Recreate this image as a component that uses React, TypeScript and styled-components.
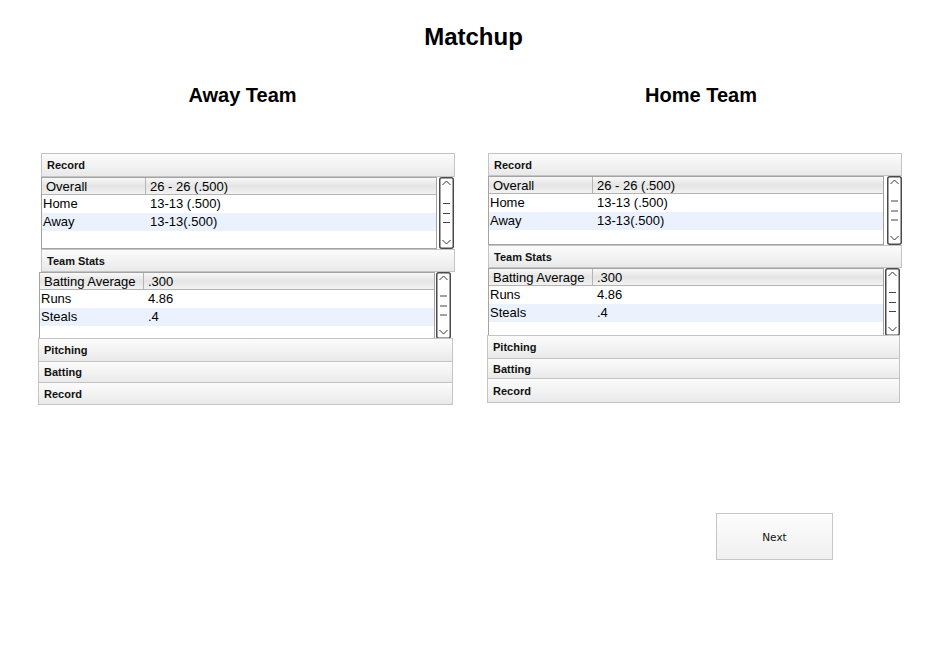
import React from "react";
import styled, { createGlobalStyle } from "styled-components";

const Global = createGlobalStyle`
  html, body { margin: 0; padding: 0; background: #fff; }
  body { font-family: "Liberation Sans", Arial, sans-serif; color: #000; }
`;

const Page = styled.div`
  width: 936px;
  height: 660px;
  padding-top: 23px;
  box-sizing: border-box;
`;

const Title = styled.h1`
  margin: 0;
  padding-left: 11px;
  text-align: center;
  font-size: 24px;
  line-height: 28px;
  font-weight: 700;
`;

const Columns = styled.div`
  display: flex;
  align-items: flex-start;
  gap: 33px;
  padding-left: 38px;
  margin-top: 32px;
`;

const Column = styled.div`
  width: 416px;
  display: flex;
  flex-direction: column;
`;

const TeamTitle = styled.h2<{ $shift: number }>`
  margin: 0 0 46px;
  text-align: center;
  font-size: 20px;
  line-height: 24px;
  font-weight: 700;
  padding-left: ${(p) => (p.$shift > 0 ? p.$shift * 2 : 0)}px;
  padding-right: ${(p) => (p.$shift < 0 ? -p.$shift * 2 : 0)}px;
`;

const Panel = styled.div`
  display: flex;
  flex-direction: column;
  width: 416px;
`;

const SectionHeader = styled.div<{ $offset?: number; $h: number; $w?: number; $overlap?: boolean }>`
  box-sizing: border-box;
  height: ${(p) => p.$h}px;
  width: ${(p) => p.$w ?? 414}px;
  margin-left: ${(p) => p.$offset ?? 0}px;
  margin-top: ${(p) => (p.$overlap ? -1 : 0)}px;
  border: 1px solid #c4c4c4;
  background: linear-gradient(#fbfbfb, #f1f1f1 60%, #e9e9e9);
  display: flex;
  align-items: center;
  padding-left: 5px;
  font-size: 11px;
  font-weight: 700;
  color: #111;
`;

const Content = styled.div<{ $offset: number; $h: number; $gap: number }>`
  display: flex;
  gap: ${(p) => p.$gap}px;
  margin-left: ${(p) => p.$offset}px;
  height: ${(p) => p.$h}px;
`;

const Table = styled.div`
  box-sizing: border-box;
  width: 396px;
  height: 100%;
  border: 1px solid #a3a3a3;
  background: #fff;
  font-size: 13px;
  overflow: hidden;
`;

const HeadRow = styled.div`
  display: flex;
  height: 16px;
  line-height: 18px;
  border-bottom: 1px solid #b4b4b4;
  background: linear-gradient(#f8f8f8, #e4e4e4 50%, #f2f2f2);
  overflow: hidden;
`;

const HeadCell = styled.div<{ $first?: boolean }>`
  box-sizing: border-box;
  width: ${(p) => (p.$first ? "104px" : "auto")};
  flex: ${(p) => (p.$first ? "none" : "1")};
  padding-left: 4px;
  border-right: ${(p) => (p.$first ? "1px solid #b4b4b4" : "none")};
`;

const Row = styled.div<{ $alt: boolean }>`
  display: flex;
  height: 18px;
  line-height: 18px;
  background: ${(p) => (p.$alt ? "#ebf2fd" : "#fff")};
`;

const Cell = styled.div<{ $first?: boolean }>`
  box-sizing: border-box;
  width: ${(p) => (p.$first ? "104px" : "auto")};
  flex: ${(p) => (p.$first ? "none" : "1")};
  padding-left: ${(p) => (p.$first ? 1 : 4)}px;
`;

const Footer = styled.div`
  display: flex;
  justify-content: flex-end;
  padding-right: 103px;
  margin-top: 108px;
`;

const NextButton = styled.button`
  width: 117px;
  height: 47px;
  border: 1px solid #c6c6c6;
  background: linear-gradient(#fdfdfd, #f0f0f0);
  font-family: "DejaVu Sans", Verdana, sans-serif;
  font-size: 10.5px;
  color: #111;
  padding: 0;
  cursor: pointer;
`;

function ScrollBar({ h }: { h: number }) {
  const mid = h / 2;
  return (
    <svg width={15} height={h} viewBox={`0 0 15 ${h}`}>
      <rect x={0.75} y={0.75} width={13.5} height={h - 1.5} rx={2} fill="#fff" stroke="#4a4a4a" strokeWidth={1.5} />
      <polyline points="3.5,8 7.5,4 11.5,8" fill="none" stroke="#333" strokeWidth={1} />
      <line x1={4} x2={11} y1={mid - 9.5} y2={mid - 9.5} stroke="#444" strokeWidth={1} />
      <line x1={4} x2={11} y1={mid + 0.5} y2={mid + 0.5} stroke="#444" strokeWidth={1} />
      <line x1={4} x2={11} y1={mid + 9.5} y2={mid + 9.5} stroke="#444" strokeWidth={1} />
      <polyline points={`3.5,${h - 9} 7.5,${h - 5} 11.5,${h - 9}`} fill="none" stroke="#333" strokeWidth={1} />
    </svg>
  );
}

type Pair = [string, string];

function DataTable({ rows }: { rows: Pair[] }) {
  const [head, ...body] = rows;
  return (
    <Table>
      <HeadRow>
        <HeadCell $first>{head[0]}</HeadCell>
        <HeadCell>{head[1]}</HeadCell>
      </HeadRow>
      {body.map((r, i) => (
        <Row key={r[0]} $alt={i % 2 === 1}>
          <Cell $first>{r[0]}</Cell>
          <Cell>{r[1]}</Cell>
        </Row>
      ))}
    </Table>
  );
}

const recordRows: Pair[] = [
  ["Overall", "26 - 26 (.500)"],
  ["Home", "13-13 (.500)"],
  ["Away", "13-13(.500)"],
];

const statRows: Pair[] = [
  ["Batting Average", ".300"],
  ["Runs", "4.86"],
  ["Steals", ".4"],
];

type Layout = {
  recOff: number;
  recHeadH: number;
  recBodyH: number;
  recGap: number;
  statsHeadH: number;
  statsBodyH: number;
  statsGap: number;
  foldW: number;
  foldH: [number, number, number];
};

const awayLayout: Layout = {
  recOff: 3,
  recHeadH: 24,
  recBodyH: 72,
  recGap: 2,
  statsHeadH: 23,
  statsBodyH: 67,
  statsGap: 1,
  foldW: 415,
  foldH: [24, 22, 23],
};

const homeLayout: Layout = {
  recOff: 1,
  recHeadH: 23,
  recBodyH: 69,
  recGap: 3,
  statsHeadH: 23,
  statsBodyH: 68,
  statsGap: 1,
  foldW: 413,
  foldH: [24, 21, 25],
};

const folds = ["Pitching", "Batting", "Record"];

function TeamPanel({ l }: { l: Layout }) {
  return (
    <Panel>
      <SectionHeader $offset={l.recOff} $h={l.recHeadH}>Record</SectionHeader>
      <Content $offset={l.recOff} $h={l.recBodyH} $gap={l.recGap}>
        <DataTable rows={recordRows} />
        <ScrollBar h={l.recBodyH} />
      </Content>
      <SectionHeader $offset={l.recOff} $h={l.statsHeadH}>Team Stats</SectionHeader>
      <Content $offset={1} $h={l.statsBodyH} $gap={l.statsGap}>
        <DataTable rows={statRows} />
        <ScrollBar h={l.statsBodyH} />
      </Content>
      {folds.map((f, i) => (
        <SectionHeader key={f} $h={l.foldH[i]} $w={l.foldW} $overlap>
          {f}
        </SectionHeader>
      ))}
    </Panel>
  );
}

export default function App() {
  return (
    <Page>
      <Global />
      <Title>Matchup</Title>
      <Columns>
        <Column>
          <TeamTitle $shift={-3.5}>Away Team</TeamTitle>
          <TeamPanel l={awayLayout} />
        </Column>
        <Column>
          <TeamTitle $shift={6}>Home Team</TeamTitle>
          <TeamPanel l={homeLayout} />
        </Column>
      </Columns>
      <Footer>
        <NextButton>Next</NextButton>
      </Footer>
    </Page>
  );
}
